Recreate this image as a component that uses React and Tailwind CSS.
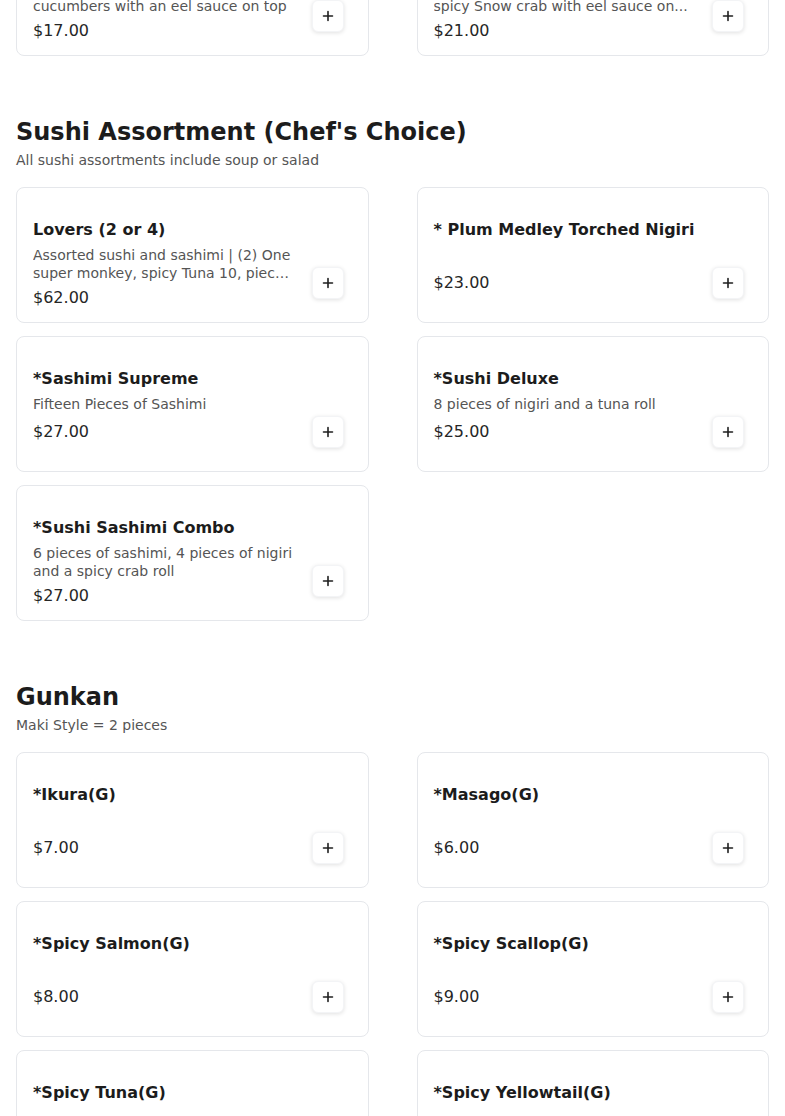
import React from 'react'

const PREV_ROW = [
  { name: 'Eel Cucumber Roll', lines: ['Eel, avocado and crunchy', 'cucumbers with an eel sauce on top'], price: '$17.00' },
  { name: 'Snow Crab Special Roll', lines: ['Shrimp tempura and cucumber topped with', 'spicy Snow crab with eel sauce on...'], price: '$21.00' },
]

const SECTIONS = [
  {
    title: "Sushi Assortment (Chef's Choice)",
    subtitle: 'All sushi assortments include soup or salad',
    items: [
      { name: 'Lovers (2 or 4)', desc: 'Assorted sushi and sashimi | (2) One super monkey, spicy Tuna 10, pieces of sushi and 12 pieces of sashimi', price: '$62.00' },
      { name: '* Plum Medley Torched Nigiri', price: '$23.00' },
      { name: '*Sashimi Supreme', desc: 'Fifteen Pieces of Sashimi', price: '$27.00' },
      { name: '*Sushi Deluxe', desc: '8 pieces of nigiri and a tuna roll', price: '$25.00' },
      { name: '*Sushi Sashimi Combo', desc: '6 pieces of sashimi, 4 pieces of nigiri and a spicy crab roll', price: '$27.00' },
    ],
  },
  {
    title: 'Gunkan',
    subtitle: 'Maki Style = 2 pieces',
    items: [
      { name: '*Ikura(G)', price: '$7.00' },
      { name: '*Masago(G)', price: '$6.00' },
      { name: '*Spicy Salmon(G)', price: '$8.00' },
      { name: '*Spicy Scallop(G)', price: '$9.00' },
      { name: '*Spicy Tuna(G)', price: '$8.00' },
      { name: '*Spicy Yellowtail(G)', price: '$8.00' },
    ],
  },
]

function PlusButton() {
  return (
    <button className="mt-[79px] flex h-8 w-8 shrink-0 items-center justify-center self-start rounded-md border border-gray-100 bg-white shadow-[0_1px_4px_rgba(0,0,0,0.12)]">
      <svg width="12" height="12" viewBox="0 0 12 12" fill="none" stroke="#1f1f1f" strokeWidth="1.6" strokeLinecap="round">
        <path d="M6 1.5v9M1.5 6h9" />
      </svg>
    </button>
  )
}

function ItemCard({ item, lines }) {
  return (
    <div className="flex h-[136px] gap-4 rounded-lg border border-gray-200 bg-white pl-4 pr-6">
      <div className="min-w-0 flex-1 pt-[30px]">
        <div className="text-base leading-6 font-bold text-[#1c1c1c]">{item.name}</div>
        {lines ? (
          <div className="mt-[5px] min-h-[20px] text-sm leading-[17.5px] text-[#555]">
            {lines.map(l => <div key={l} className="truncate">{l}</div>)}
          </div>
        ) : (
          <div className="mt-[5px] line-clamp-2 min-h-[20px] text-sm leading-[17.5px] text-[#555]">
            {item.desc}
          </div>
        )}
        <div className="mt-[4px] text-base leading-6 text-[#262626]">{item.price}</div>
      </div>
      <PlusButton />
    </div>
  )
}

export default function App() {
  return (
    <div className="min-h-screen overflow-hidden bg-white px-4 font-['DejaVu_Sans',sans-serif]">
      {/* tail of the previous section, scrolled mostly out of view */}
      <div className="-mt-[80px] grid grid-cols-2 gap-x-12">
        {PREV_ROW.map(it => <ItemCard key={it.name} item={it} lines={it.lines} />)}
      </div>

      {SECTIONS.map(sec => (
        <section key={sec.title} className="mt-[60px]">
          <h2 className="text-2xl leading-8 font-bold text-[#1c1c1c]">{sec.title}</h2>
          <p className="mt-[2px] text-sm leading-5 text-[#555]">{sec.subtitle}</p>
          <div className="mt-[17px] grid grid-cols-2 gap-x-12 gap-y-[13px]">
            {sec.items.map(it => <ItemCard key={it.name} item={it} />)}
          </div>
        </section>
      ))}
    </div>
  )
}
